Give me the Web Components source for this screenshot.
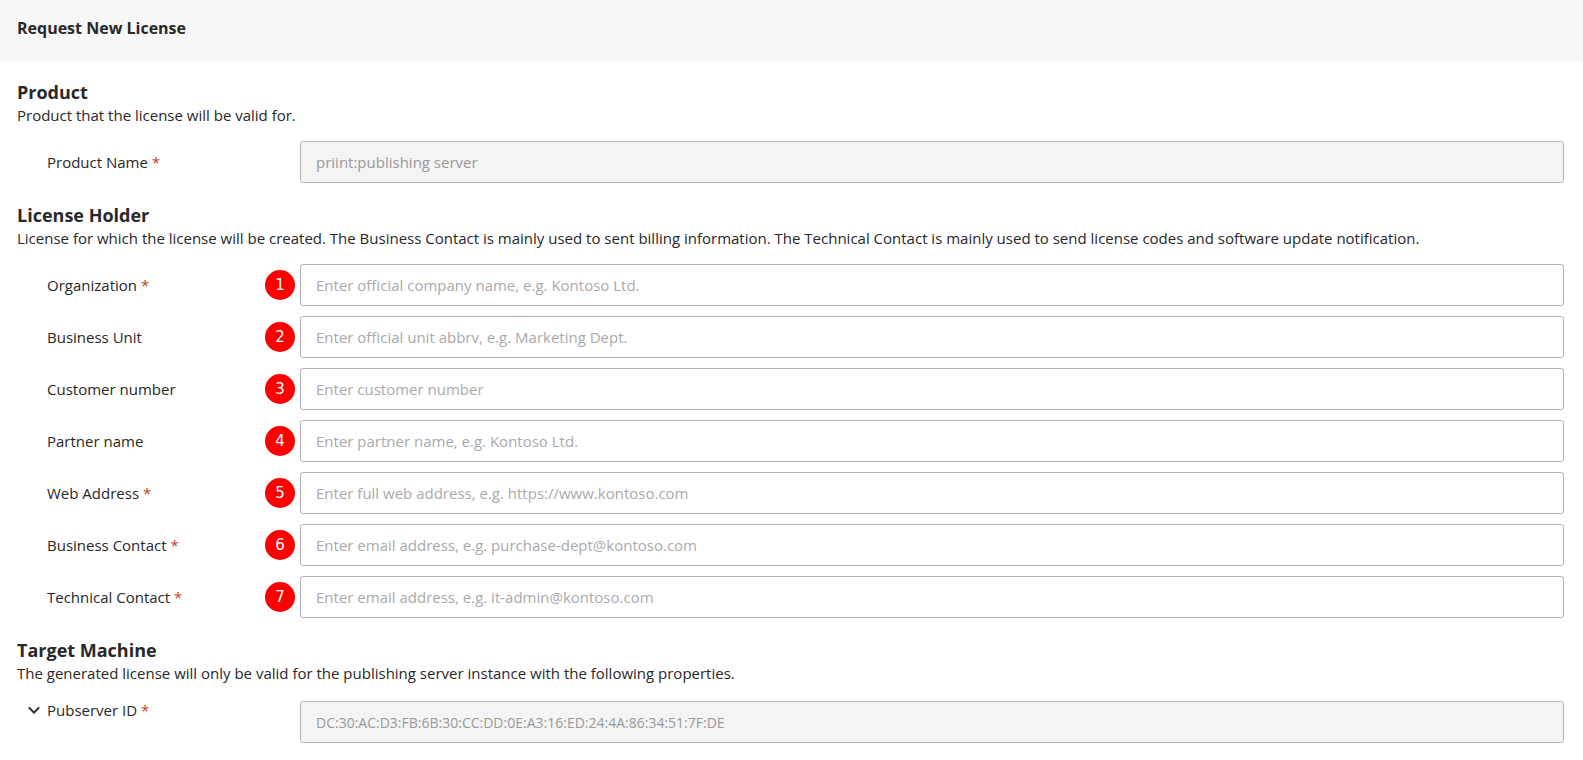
<!DOCTYPE html>
<html lang="en">
<head>
<meta charset="utf-8">
<meta name="viewport" content="width=device-width, initial-scale=1">
<title>Request New License</title>
<style>
  body {
    margin: 0;
    background: #fff;
    color: #282828;
    font: 15px/22px "Open Sans", "Noto Sans", sans-serif;
  }
  main { padding: 18px 19px 15px 17px; }
</style>
</head>
<body>
<page-header>Request New License</page-header>
<main>
  <form-section heading="Product" description="Product that the license will be valid for.">
    <form-field label="Product Name" required disabled value="priint:publishing server"></form-field>
  </form-section>
  <form-section heading="License Holder" description="License for which the license will be created. The Business Contact is mainly used to sent billing information. The Technical Contact is mainly used to send license codes and software update notification.">
    <form-field label="Organization" required placeholder="Enter official company name, e.g. Kontoso Ltd."><step-badge slot="badge">1</step-badge></form-field>
    <form-field label="Business Unit" placeholder="Enter official unit abbrv, e.g. Marketing Dept."><step-badge slot="badge">2</step-badge></form-field>
    <form-field label="Customer number" placeholder="Enter customer number"><step-badge slot="badge">3</step-badge></form-field>
    <form-field label="Partner name" placeholder="Enter partner name, e.g. Kontoso Ltd."><step-badge slot="badge">4</step-badge></form-field>
    <form-field label="Web Address" required placeholder="Enter full web address, e.g. https://www.kontoso.com"><step-badge slot="badge">5</step-badge></form-field>
    <form-field label="Business Contact" required type="email" placeholder="Enter email address, e.g. purchase-dept@kontoso.com"><step-badge slot="badge">6</step-badge></form-field>
    <form-field label="Technical Contact" required type="email" placeholder="Enter email address, e.g. it-admin@kontoso.com"><step-badge slot="badge">7</step-badge></form-field>
  </form-section>
  <form-section heading="Target Machine" description="The generated license will only be valid for the publishing server instance with the following properties.">
    <form-field class="code" label="Pubserver ID" required disabled expandable value="DC:30:AC:D3:FB:6B:30:CC:DD:0E:A3:16:ED:24:4A:86:34:51:7F:DE"></form-field>
  </form-section>
</main>
<script>
class PageHeader extends HTMLElement {
  constructor() {
    super();
    this.attachShadow({ mode: "open" }).innerHTML = `
      <style>
        :host { display: block; background: #f7f7f7; padding: 16px 17px 22px; }
        h1 { margin: 0; font-size: 16px; line-height: 24px; font-weight: 700; }
      </style>
      <h1><slot></slot></h1>`;
  }
}
customElements.define("page-header", PageHeader);

class StepBadge extends HTMLElement {
  constructor() {
    super();
    this.attachShadow({ mode: "open" }).innerHTML = `
      <style>
        :host {
          display: flex; align-items: center; justify-content: center;
          width: 30px; height: 30px; border-radius: 50%;
          background: #f00; color: #fff;
          font: 15px/30px "DejaVu Sans", sans-serif;
        }
      </style>
      <slot></slot>`;
  }
}
customElements.define("step-badge", StepBadge);

class FormSection extends HTMLElement {
  constructor() {
    super();
    this.attachShadow({ mode: "open" }).innerHTML = `
      <style>
        :host { display: block; margin-bottom: 20px; }
        :host(:last-of-type) { margin-bottom: 0; }
        h2 { margin: 0; font-size: 18px; line-height: 24px; font-weight: 700; }
        p { margin: 0 0 15px; line-height: 22px; }
        .fields { display: grid; gap: 10px; }
      </style>
      <section>
        <h2></h2>
        <p></p>
        <div class="fields"><slot></slot></div>
      </section>`;
  }
  connectedCallback() {
    this.shadowRoot.querySelector("h2").textContent = this.getAttribute("heading");
    this.shadowRoot.querySelector("p").textContent = this.getAttribute("description");
  }
}
customElements.define("form-section", FormSection);

class FormField extends HTMLElement {
  constructor() {
    super();
    this.attachShadow({ mode: "open" }).innerHTML = `
      <style>
        :host { display: grid; grid-template-columns: 283px 1fr; align-items: center; }
        :host([expandable]) { align-items: start; }
        :host([expandable]) input { margin-top: 2px; }
        .caption { display: flex; align-items: center; padding-right: 5px; }
        .lead { flex: none; box-sizing: border-box; width: 30px; padding-right: 4px; display: flex; justify-content: flex-end; }
        .star { color: #c8401c; }
        slot { display: block; margin-left: auto; }
        button {
          display: flex; align-items: center; justify-content: center;
          width: 18px; height: 18px; padding: 0; border: 0;
          background: none; color: inherit; cursor: pointer;
        }
        button[hidden] { display: none; }
        input {
          box-sizing: border-box; width: 100%; height: 42px; padding: 0 15px;
          border: 1px solid #b4b4b4; border-radius: 3px;
          background: #fff; color: #282828; font: inherit;
        }
        input::placeholder { color: #aaa; opacity: 1; }
        input:disabled { background: #f4f4f4; color: #999; }
        :host(.code) input { font-size: 14px; }
      </style>
      <div class="caption">
        <span class="lead">
          <button type="button" aria-label="Toggle details" aria-expanded="false" hidden>
            <svg width="12" height="8" viewBox="0 0 12 8" fill="none" stroke="currentColor" stroke-width="2" aria-hidden="true"><path d="M.8 1.4 6 6.6 11.2 1.4"/></svg>
          </button>
        </span>
        <label for="field"><span class="text"></span></label>
        <slot name="badge"></slot>
      </div>
      <input id="field">`;
  }
  connectedCallback() {
    const root = this.shadowRoot;
    const input = root.querySelector("input");
    const button = root.querySelector("button");
    root.querySelector(".text").textContent = this.getAttribute("label");
    if (this.hasAttribute("required")) {
      const star = document.createElement("span");
      star.className = "star";
      star.textContent = "*";
      root.querySelector("label").append(" ", star);
      input.required = true;
    }
    input.type = this.getAttribute("type") || "text";
    input.placeholder = this.getAttribute("placeholder") || "";
    input.value = this.getAttribute("value") || "";
    input.disabled = this.hasAttribute("disabled");
    button.hidden = !this.hasAttribute("expandable");
    button.addEventListener("click", () => {
      button.setAttribute("aria-expanded", String(button.getAttribute("aria-expanded") !== "true"));
    });
  }
}
customElements.define("form-field", FormField);
</script>
</body>
</html>
